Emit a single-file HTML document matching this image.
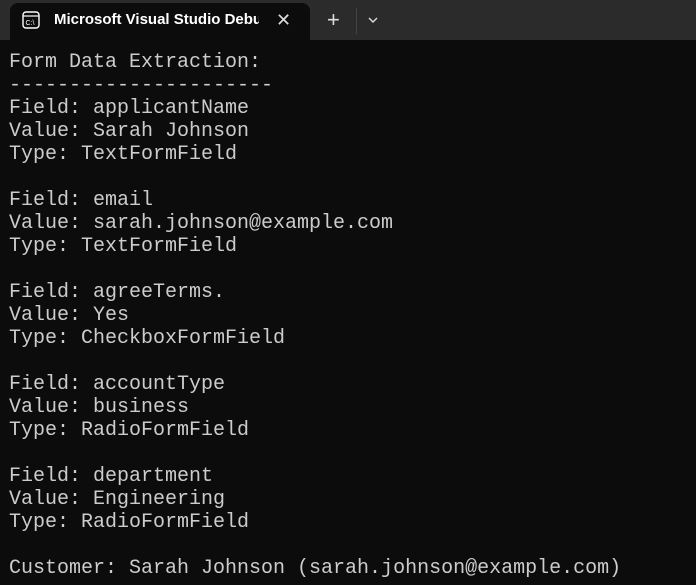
<!DOCTYPE html>
<html><head><style>
html,body{margin:0;padding:0;width:696px;height:585px;background:#0c0c0c;overflow:hidden}
.bar{position:absolute;left:0;top:0;width:696px;height:40px;background:#2b2b2b}
.tab{position:absolute;left:10px;top:3px;width:300px;height:37px;background:#0c0c0c;border-radius:8px 8px 0 0}
.title{position:absolute;left:54px;top:11px;font:600 15px "Liberation Sans",sans-serif;color:#fff;white-space:nowrap;width:205px;overflow:hidden}
.x{position:absolute;left:276px;top:10px;color:#ddd;font:18px "Liberation Sans",sans-serif}
.plus{position:absolute;left:327px;top:7px;color:#ddd;font:22px "Liberation Sans",sans-serif}
.sep{position:absolute;left:356px;top:8px;width:1px;height:26px;background:#444}
pre{position:absolute;left:9px;top:51px;margin:0;font:20px/23px "Liberation Mono",monospace;color:#cccccc}
</style></head><body>
<div class="bar"></div>
<div class="tab"></div>
<svg style="position:absolute;left:22px;top:11px" width="18" height="18" viewBox="0 0 18 18"><rect x="1" y="1" width="16" height="16" rx="3" fill="none" stroke="#fff" stroke-width="1.4"/><line x1="1" y1="5" x2="17" y2="5" stroke="#fff" stroke-width="1.2"/><text x="3.5" y="14" font-size="7" fill="#fff" font-family="Liberation Sans">C:\</text></svg>
<div class="title">Microsoft Visual Studio Debug Console</div>
<div class="x">✕</div>
<div class="plus">+</div>
<div class="sep"></div>
<svg style="position:absolute;left:367px;top:16px" width="12" height="8" viewBox="0 0 12 8"><path d="M2 2 L6 6 L10 2" fill="none" stroke="#ddd" stroke-width="1.4"/></svg>
<pre>Form Data Extraction:
----------------------
Field: applicantName
Value: Sarah Johnson
Type: TextFormField

Field: email
Value: sarah.johnson@example.com
Type: TextFormField

Field: agreeTerms.
Value: Yes
Type: CheckboxFormField

Field: accountType
Value: business
Type: RadioFormField

Field: department
Value: Engineering
Type: RadioFormField

Customer: Sarah Johnson (sarah.johnson@example.com)</pre>
</body></html>
